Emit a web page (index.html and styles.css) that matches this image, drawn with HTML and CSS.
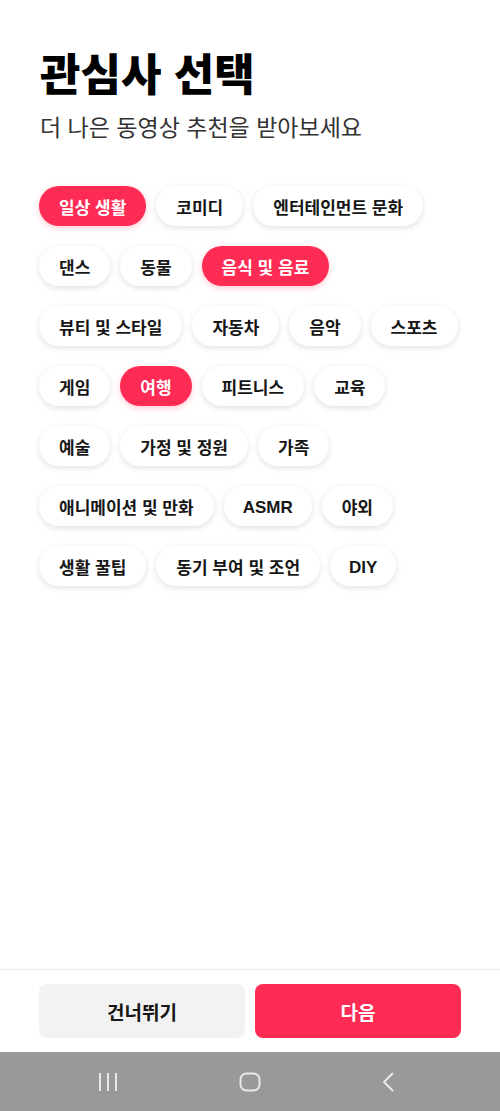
FILE: index.html
```html
<!DOCTYPE html>
<html lang="ko">
<head>
<meta charset="utf-8">
<title>관심사 선택</title>
<link rel="stylesheet" href="styles.css">
</head>
<body>
<div class="screen">
  <main class="content">
    <h1 class="title">관심사 선택</h1>
    <p class="subtitle">더 나은 동영상 추천을 받아보세요</p>
    <div class="chips">
      <span class="chip active">일상 생활</span>
      <span class="chip">코미디</span>
      <span class="chip">엔터테인먼트 문화</span>
      <span class="chip">댄스</span>
      <span class="chip">동물</span>
      <span class="chip active">음식 및 음료</span>
      <span class="chip">뷰티 및 스타일</span>
      <span class="chip">자동차</span>
      <span class="chip">음악</span>
      <span class="chip">스포츠</span>
      <span class="chip">게임</span>
      <span class="chip active">여행</span>
      <span class="chip">피트니스</span>
      <span class="chip">교육</span>
      <span class="chip">예술</span>
      <span class="chip">가정 및 정원</span>
      <span class="chip">가족</span>
      <span class="chip">애니메이션 및 만화</span>
      <span class="chip latin">ASMR</span>
      <span class="chip">야외</span>
      <span class="chip">생활 꿀팁</span>
      <span class="chip">동기 부여 및 조언</span>
      <span class="chip latin">DIY</span>
    </div>
  </main>
  <footer class="footer">
    <button class="btn btn-skip">건너뛰기</button>
    <button class="btn btn-next">다음</button>
  </footer>
  <nav class="navbar">
    <svg class="nav-icon" width="20" height="20" viewBox="0 0 20 20">
      <path d="M2 1v18M10 1v18M18 1v18" stroke="#e8e8e8" stroke-width="2" fill="none"/>
    </svg>
    <svg class="nav-icon" width="22" height="20" viewBox="0 0 22 20">
      <rect x="1.5" y="1.5" width="19" height="17" rx="6" stroke="#e8e8e8" stroke-width="2" fill="none"/>
    </svg>
    <svg class="nav-icon" width="14" height="20" viewBox="0 0 14 20">
      <path d="M11.5 1.5L3 10l8.5 8.5" stroke="#e8e8e8" stroke-width="2" fill="none" stroke-linecap="round" stroke-linejoin="round"/>
    </svg>
  </nav>
</div>
</body>
</html>
```

FILE: styles.css
```css
html, body {
  margin: 0;
  padding: 0;
  background: #ffffff;
}

body {
  font-family: "Noto Sans CJK KR", "Noto Sans", "Liberation Sans", sans-serif;
  color: #000;
}

.screen {
  display: flex;
  flex-direction: column;
  height: 1111px;
}

.content {
  flex: 1;
  padding: 48px 39px 0 40px;
}

.title {
  margin: 0;
  font-size: 44px;
  line-height: 48px;
  font-weight: 900;
  letter-spacing: 0;
  color: #000;
}

.subtitle {
  margin: 15px 0 0;
  font-size: 23px;
  line-height: 30px;
  font-weight: 400;
  color: #333333;
}

.chips {
  margin: 45px 0 0 -1px;
  display: flex;
  flex-wrap: wrap;
  column-gap: 10px;
  row-gap: 20px;
}

.chip {
  display: inline-flex;
  align-items: center;
  height: 40px;
  padding: 0 20px;
  border-radius: 20px;
  background: #fff;
  box-shadow: 0 2px 6px rgba(0, 0, 0, 0.12);
  font-size: 17px;
  font-weight: 700;
  color: #161616;
  white-space: nowrap;
  box-sizing: border-box;
}

.chip.latin {
  font-family: "Liberation Sans", "Noto Sans CJK KR", sans-serif;
  padding: 3px 19px 0;
}

.chip.active {
  background: #fe2c55;
  color: #fff;
  box-shadow: 0 2px 6px rgba(254, 44, 85, 0.25);
}

.footer {
  display: flex;
  gap: 10px;
  padding: 14px 39px 14px 39px;
  border-top: 1px solid #ececec;
}

.btn {
  flex: 1;
  height: 54px;
  border: none;
  border-radius: 8px;
  font-family: inherit;
  font-size: 19px;
  font-weight: 700;
}

.btn-skip {
  background: #f2f2f2;
  color: #161616;
}

.btn-next {
  background: #fe2c55;
  color: #fff;
}

.navbar {
  height: 59px;
  background: #999999;
  display: flex;
  align-items: center;
  justify-content: space-between;
  padding: 0 105px 0 98px;
}

.nav-icon {
  display: block;
}
```
